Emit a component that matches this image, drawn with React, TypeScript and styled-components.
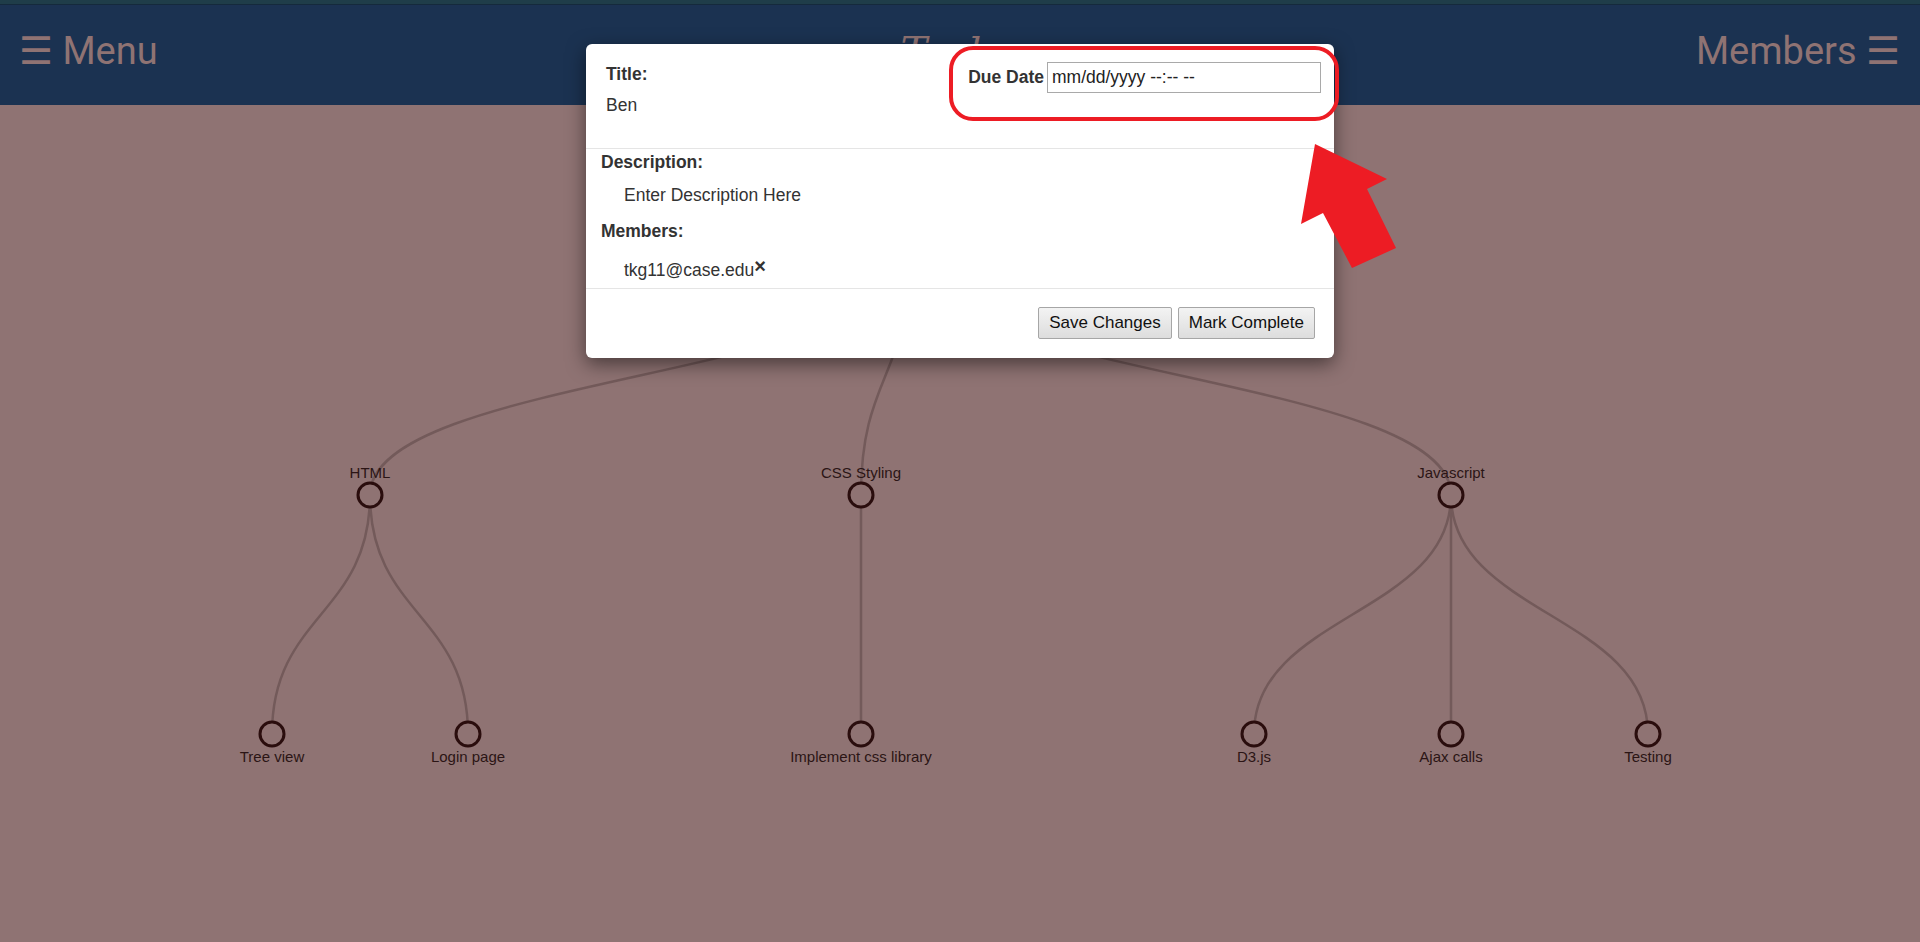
import styled, { createGlobalStyle } from "styled-components";

type TreeNode = {
  name: string;
  x: number;
  y: number;
  children?: TreeNode[];
};

// tree laid out in canvas coords (canvas starts under the top bar)
const tree: TreeNode = {
  name: "Project",
  x: 910,
  y: 151,
  children: [
    {
      name: "HTML",
      x: 370,
      y: 390,
      children: [
        { name: "Tree view", x: 272, y: 629 },
        { name: "Login page", x: 468, y: 629 },
      ],
    },
    {
      name: "CSS Styling",
      x: 861,
      y: 390,
      children: [{ name: "Implement css library", x: 861, y: 629 }],
    },
    {
      name: "Javascript",
      x: 1451,
      y: 390,
      children: [
        { name: "D3.js", x: 1254, y: 629 },
        { name: "Ajax calls", x: 1451, y: 629 },
        { name: "Testing", x: 1648, y: 629 },
      ],
    },
  ],
};

const flatten = (n: TreeNode): TreeNode[] => [
  n,
  ...(n.children || []).flatMap(flatten),
];

const links = (n: TreeNode): { s: TreeNode; t: TreeNode }[] =>
  (n.children || []).flatMap((c) => [{ s: n, t: c }, ...links(c)]);

const diagonal = (s: TreeNode, t: TreeNode) => {
  const my = (s.y + t.y) / 2;
  return `M${s.x},${s.y}C${s.x},${my} ${t.x},${my} ${t.x},${t.y}`;
};

const App = () => {
  const nodes = flatten(tree);
  return (
    <Page>
      <GlobalStyle />
      <TopBar>
        <MenuButton>☰ Menu</MenuButton>
        <AppTitle>Tasks</AppTitle>
        <MenuButton>Members ☰</MenuButton>
      </TopBar>

      <Canvas>
        <svg width="1920" height="837">
          {links(tree).map((l, i) => (
            <Link key={i} d={diagonal(l.s, l.t)} />
          ))}
          {nodes.map((n) => (
            <g key={n.name} transform={`translate(${n.x},${n.y})`}>
              <NodeCircle r={12} />
              <NodeLabel y={n.children ? -21 : 24} textAnchor="middle">
                {n.name}
              </NodeLabel>
            </g>
          ))}
        </svg>
      </Canvas>

      <Modal>
        <ModalHeader>
          <TitleBlock>
            <Label>Title:</Label>
            <Value>Ben</Value>
          </TitleBlock>
          <DueRow>
            <Label>Due Date</Label>
            <DateBox>mm/dd/yyyy --:-- --</DateBox>
          </DueRow>
        </ModalHeader>
        <ModalBody>
          <Label>Description:</Label>
          <Indented $gap={8}>Enter Description Here</Indented>
          <Label $gap={11}>Members:</Label>
          <Indented $gap={14}>
            tkg11@case.edu<RemoveMark>×</RemoveMark>
          </Indented>
        </ModalBody>
        <ModalFooter>
          <Button>Save Changes</Button>
          <Button>Mark Complete</Button>
        </ModalFooter>
      </Modal>

      <Callout width="1920" height="300">
        <rect
          x="951"
          y="48"
          width="386"
          height="71"
          rx="22"
          fill="none"
          stroke="#ed1c24"
          strokeWidth="4"
        />
        <polygon
          points="1315,144 1387,179 1367,189 1396,248 1352,268 1323,213 1301,224"
          fill="#ed1c24"
        />
      </Callout>
    </Page>
  );
};

export default App;

const GlobalStyle = createGlobalStyle`
  html, body {
    margin: 0;
    padding: 0;
    background: #8f7373;
    overflow: hidden;
  }
`;

const Page = styled.div`
  position: relative;
  width: 1920px;
  height: 942px;
  background: #8f7373;
  font-family: "Liberation Sans", Arial, sans-serif;
`;

const TopBar = styled.header`
  display: flex;
  align-items: center;
  justify-content: space-between;
  height: 94px;
  box-sizing: content-box;
  padding: 0 20px 7px 19px;
  background: #1b3251;
  border-top: 4px solid #1f3d49;
  box-shadow: inset 0 1px 0 #152a3c;
  color: #8f7373;
`;

const MenuButton = styled.div`
  font-family: Roboto, "Liberation Sans", sans-serif;
  font-size: 38px;
  white-space: nowrap;
`;

const AppTitle = styled.div`
  flex: 1;
  text-align: center;
  font-family: "DejaVu Serif", serif;
  font-style: italic;
  font-size: 40px;
  margin-left: 60px;
`;

const Canvas = styled.div`
  display: block;
  svg {
    display: block;
  }
`;

const Link = styled.path`
  fill: none;
  stroke: #735a5a;
  stroke-width: 2.5px;
`;

const NodeCircle = styled.circle`
  fill: #8f7373;
  stroke: #2a0d0d;
  stroke-width: 3px;
`;

const NodeLabel = styled.text`
  font-family: "Liberation Sans", Arial, sans-serif;
  font-size: 15px;
  fill: #2b1515;
  dominant-baseline: middle;
`;

const Modal = styled.div`
  position: absolute;
  left: 586px;
  top: 44px;
  width: 748px;
  background: #fff;
  border-radius: 6px;
  box-shadow: 0 6px 19px rgba(0, 0, 0, 0.5);
  color: #333;
  font-size: 17.5px;
  line-height: 25px;
`;

const ModalHeader = styled.div`
  display: flex;
  justify-content: space-between;
  align-items: flex-start;
  height: 105px;
  box-sizing: border-box;
  padding: 18px 13px 0 20px;
  border-bottom: 1px solid #e5e5e5;
`;

const TitleBlock = styled.div`
  display: flex;
  flex-direction: column;
  gap: 6px;
`;

const Label = styled.div<{ $gap?: number }>`
  font-weight: bold;
  margin-top: ${(p) => p.$gap || 0}px;
`;

const Value = styled.div``;

const DueRow = styled.div`
  display: flex;
  align-items: center;
  gap: 3px;
`;

const DateBox = styled.div`
  width: 274px;
  height: 31px;
  box-sizing: border-box;
  border: 1px solid #a9a9a9;
  padding: 0 4px;
  display: flex;
  align-items: center;
  color: #222;
`;

const ModalBody = styled.div`
  padding: 1px 15px 5px;
  border-bottom: 1px solid #e5e5e5;
`;

const Indented = styled.div<{ $gap?: number }>`
  margin-top: ${(p) => p.$gap || 0}px;
  padding-left: 23px;
`;

const RemoveMark = styled.span`
  font-weight: bold;
  font-size: 20px;
  vertical-align: 3px;
  line-height: 0;
`;

const ModalFooter = styled.div`
  display: flex;
  justify-content: flex-end;
  gap: 6px;
  padding: 18px 19px 19px;
`;

const Button = styled.button`
  height: 32px;
  padding: 0 10px;
  font-family: "Liberation Sans", Arial, sans-serif;
  font-size: 17px;
  color: #111;
  background: linear-gradient(#f3f3f3, #dddddd);
  border: 1px solid #a6a6a6;
  border-radius: 2px;
`;

const Callout = styled.svg`
  position: absolute;
  left: 0;
  top: 0;
  pointer-events: none;
`;
